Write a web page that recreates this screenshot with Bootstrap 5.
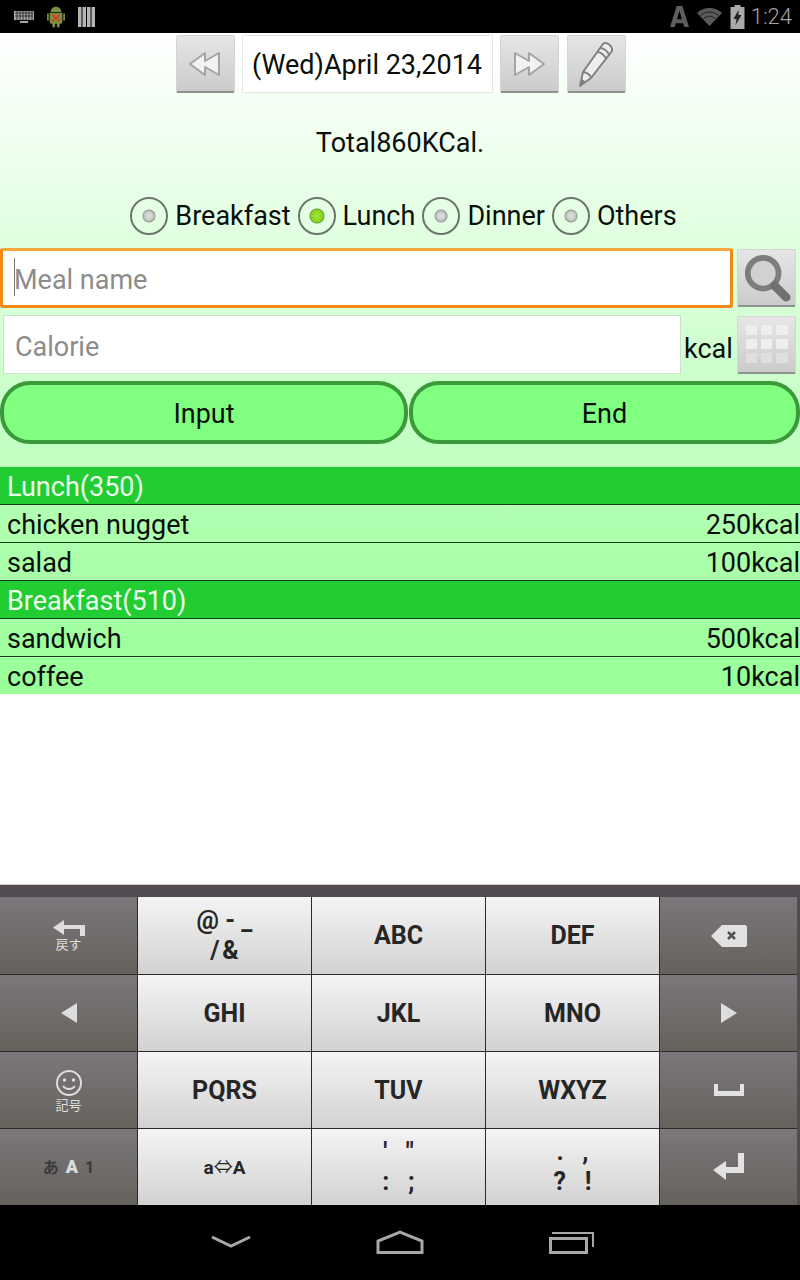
<!DOCTYPE html>
<html lang="en">
<head>
    <meta charset="UTF-8">
    <meta name="viewport" content="width=device-width, initial-scale=1.0">
    <title>Calorie Diary</title>
    <link href="https://cdn.jsdelivr.net/npm/bootstrap@5.3.2/dist/css/bootstrap.min.css" rel="stylesheet">
    <style>
        html, body { height: 1280px; overflow: hidden; }
        body { width: 800px; font-family: Roboto, "Noto Sans CJK JP", sans-serif; font-size: 27px; color: #0a0f0a; background: #fff; }
        .status-bar { height: 33px; background: #000; color: #9a9a9a; padding: 0 8px 0 14px; }
        .status-time { font-size: 22px; font-weight: 300; margin-left: 6px; color: #a5a5a5; }
        .status-left { margin-right: 13px; }
        .status-right { margin-right: 8px; }
        .app-top { height: 434px; background: linear-gradient(#fff 0, #e2ffe2 45%, #bfffbf 100%); }
        .date-row { height: 62px; padding: 2px 0 0 1px; gap: 7px; }
        .gray-btn { width: 59px; height: 58px; padding: 0; border: 1px solid #d4d6d4; border-bottom: 2px solid #8f918f; border-radius: 2px; background: linear-gradient(#e6e6e6, #cbcbcb); display: flex; align-items: center; justify-content: center; flex: none; }
        .pencil-btn { margin-left: 1px; }
        .date-box { width: 251px; height: 58px; background: #fff; border: 1px solid #e3e8e3; text-align: center; line-height: 58px; font-size: 27px; }
        .total-row { height: 95px; padding-top: 2px; }
        .radio-row { height: 52px; padding-left: 7px; }
        .meal-radio { width: 38px; height: 38px; margin: 0 7px 0 0; flex: none; appearance: none; border: 2px solid #6b766b; border-radius: 50%; background: radial-gradient(circle, #dde0dd 0, #ccd0cc 4px, #99a099 6px, transparent 7px); }
        .meal-radio:checked { background: radial-gradient(circle, #a4e432 0, #86d41c 6px, #6d9c3a 7px, transparent 8px); }
        .radio-label { margin-right: 7px; line-height: 38px; }
        .radio-label-end { margin-right: 0; }
        .field-row { padding: 0 4px 0 0; }
        .meal-row { margin-top: 6px; }
        .cal-row { margin-top: 7px; }
        .pill-row { margin-top: 7px; gap: 1px; }
        .meal-input, .cal-input { border-radius: 3px; font-size: 27px; background: #fff; }
        .meal-input { height: 60px; padding: 4px 11px 0; border: 3px solid #f08a14; border-top-color: #f7a53c; }
        .cal-input { height: 59px; width: 678px; margin-left: 3px; padding: 4px 11px 0; flex: none; border: 1px solid #cfe0cf; border-radius: 0; }
        .meal-input::placeholder, .cal-input::placeholder { color: #8c8c8c; font-size: 27px; }
        .meal-input:focus { box-shadow: none; border-color: #f08a14; }
        .text-caret { position: absolute; left: 14px; top: 10px; width: 1px; height: 38px; background: #777; }
        .kcal-label { width: 53px; margin-left: 3px; line-height: 50px; padding-top: 8px; flex: none; }
        .pill-btn { height: 63px; padding: 4px 0 0; border: 4px solid #3a9a3a; border-radius: 30px; background: #80ff80; color: #0a0f0a; font-size: 27px; }
        .pill-left { width: 408px; flex: none; }
        .pill-right { flex: 1 1 0; }
        .meal-list { height: 227px; background: linear-gradient(#b8ffb8, #98ff98); border-radius: 0; }
        .meal-list .list-group-item { height: 38px; padding: 1px 0 0 7px; background: transparent; border: 0; border-bottom: 1px solid #1a3a1a; color: #0a0f0a; font-size: 27px; line-height: 38px; border-radius: 0; margin: 0; }
        .meal-list .list-group-item:last-child { border-bottom: 0; height: 37px; }
        .meal-list .meal-head { background: #22cc33; color: #eaffea; }
        .app-blank { height: 190px; background: #fff; }
        .keyboard { height: 321px; border-top: 1px solid #d0d0d0; background: #524c52; padding-top: 12px; }
        .key-grid { display: grid; grid-template-columns: 137px 173px 173px 173px 137px; grid-template-rows: 77px 76px 76px 76px; gap: 1px; background: #2a2a2a; height: 308px; width: 797px; border-right: 1px solid #2a2a2a; }
        .key { display: flex; flex-direction: column; align-items: center; justify-content: center; padding: 0; border: 0; border-radius: 0; font-family: Roboto, "Noto Sans CJK JP", sans-serif; line-height: 1; }
        .key-light { background: linear-gradient(#f4f4f4, #d2d2d2); color: #262626; font-weight: 700; font-size: 25px; }
        .key-dark { background: linear-gradient(#7b777b, #65625c); color: #dcdcdc; }
        .key-cap { font-size: 13px; margin-top: 2px; color: #dedede; }
        .key-pair { font-size: 25px; line-height: 30px; white-space: pre; }
        .key-mode { font-size: 16px; font-weight: 700; color: #3b3b3b; }
        .key-mode b { color: #ddd; margin: 0 7px; font-size: 18px; }
        .key-swap { font-size: 19px; }
        .swap-arrow { font-weight: 400; }
        .nav-bar { height: 75px; background: #000; padding-bottom: 2px; }
        .nav-back { margin-left: 211px; }
        .nav-other { margin-left: 125px; }
    </style>
</head>
<body>
    <div class="status-bar d-flex align-items-center">
        <svg width="20" height="12" viewBox="0 0 20 12" class="status-left"><path fill="#a8a8a8" d="M0 0h20v9H0z"/><path stroke="#333" d="M1 2h18M1 5h18M3 0v9M6 0v9M9 0v9M12 0v9M15 0v9M18 0v9"/><path fill="#a8a8a8" d="M6 10h8v2H6z"/></svg>
        <svg width="18" height="22" viewBox="0 0 20 26" class="status-left" preserveAspectRatio="none"><path fill="#7a8f40" d="M4 7a6 6 0 0 1 12 0zM3 8h14v11a2 2 0 0 1-2 2h-1v4h-3v-4H9v4H6v-4H5a2 2 0 0 1-2-2zM0 9h2v8H0zM18 9h2v8h-2z"/><path stroke="#c8482a" stroke-width="2.4" d="M6 10l8 8M14 10l-8 8"/></svg>
        <svg width="17" height="20" viewBox="0 0 17 20"><path fill="#b4b4b4" d="M0 0h3.500v20H0zM4.500 0H8v20H4.500zM9 0h3.500v20H9zM13.500 0H17v20h-3.500z"/></svg>
        <div class="ms-auto d-flex align-items-center">
            <svg width="19" height="21" viewBox="0 0 20 22" class="status-right"><path fill="#5e5e5e" d="M7 0h6l7 22h-5l-1.200-4H6.200L5 22H0zM7.400 14h5.200L10 5z"/></svg>
            <svg width="25" height="18" viewBox="0 0 25 18" class="status-right"><path fill="#5a5a5a" d="M0 5a18 18 0 0 1 25 0L12.500 18z"/><path stroke="#222" fill="none" d="M3.500 7.500a13 13 0 0 1 18 0M6.500 10.500a9 9 0 0 1 12 0"/></svg>
            <svg width="15" height="24" viewBox="0 0 14 24"><path fill="#aaa" d="M4 0h6v2h4v22H0V2h4z"/><path fill="#222" d="M8 5L3 14h3l-1 6 6-10H8z"/></svg>
            <span class="status-time">1:24</span>
        </div>
    </div>

    <div class="app-top d-flex flex-column">
        <div class="date-row d-flex justify-content-center">
            <button type="button" class="gray-btn btn">
                <svg width="34" height="26" viewBox="0 0 34 26"><path fill="#f2f2f2" stroke="#a3a5a3" stroke-width="2" stroke-linejoin="round" d="M17 2v8l14-8v22l-14-8v8L2 13z"/></svg>
            </button>
            <div class="date-box">(Wed)April 23,2014</div>
            <button type="button" class="gray-btn btn">
                <svg width="34" height="26" viewBox="0 0 34 26"><path fill="#f2f2f2" stroke="#a3a5a3" stroke-width="2" stroke-linejoin="round" d="M17 2v8L3 2v22l14-8v8l15-11z"/></svg>
            </button>
            <button type="button" class="gray-btn btn pencil-btn">
                <svg width="40" height="48" viewBox="0 0 40 48"><path fill="#eee" stroke="#7f817f" stroke-width="2" stroke-linejoin="round" d="M27 4c3-3 10 2 9 7L15 38 4 46l3-14z"/><path stroke="#7f817f" stroke-width="2" fill="none" d="M24 8c4 0 9 4 9 8M21 12c4 0 9 4 9 8M7 32c3 0 8 3 8 6"/><path fill="#7f817f" d="M4 46l2-7 4 3z"/></svg>
            </button>
        </div>
        <div class="total-row d-flex align-items-center justify-content-center">Total860KCal.</div>
        <div class="radio-row d-flex align-items-center justify-content-center">
            <input class="meal-radio" type="radio" name="meal" id="m1"><label class="radio-label" for="m1">Breakfast</label>
            <input class="meal-radio" type="radio" name="meal" id="m2" checked><label class="radio-label" for="m2">Lunch</label>
            <input class="meal-radio" type="radio" name="meal" id="m3"><label class="radio-label" for="m3">Dinner</label>
            <input class="meal-radio" type="radio" name="meal" id="m4"><label class="radio-label radio-label-end" for="m4">Others</label>
        </div>
        <div class="field-row meal-row d-flex align-items-center gap-1">
            <div class="position-relative flex-grow-1">
                <input class="form-control meal-input" type="text" placeholder="Meal name">
                <span class="text-caret"></span>
            </div>
            <button type="button" class="gray-btn btn">
                <svg width="48" height="50" viewBox="0 0 50 52"><circle cx="21" cy="21" r="16" fill="#d0d2d0" stroke="#7c7e7c" stroke-width="6"/><path stroke="#6f716f" stroke-width="9" stroke-linecap="round" d="M33 34l12 12"/></svg>
            </button>
        </div>
        <div class="field-row cal-row d-flex align-items-center">
            <input class="form-control cal-input" type="text" placeholder="Calorie">
            <span class="kcal-label">kcal</span>
            <button type="button" class="gray-btn btn">
                <svg width="42" height="38" viewBox="0 0 42 38"><g fill="#eeeeee"><rect width="11" height="10"/><rect x="15" width="11" height="10"/><rect x="30" width="12" height="10"/><rect y="14" width="11" height="10"/><rect x="15" y="14" width="11" height="10"/><rect x="30" y="14" width="12" height="10"/></g><g fill="#dfdfdf"><rect y="28" width="11" height="10"/><rect x="15" y="28" width="11" height="10"/><rect x="30" y="28" width="12" height="10"/></g></svg>
            </button>
        </div>
        <div class="pill-row d-flex">
            <button type="button" class="btn pill-btn pill-left">Input</button>
            <button type="button" class="btn pill-btn pill-right">End</button>
        </div>
    </div>

    <ul class="list-group meal-list">
        <li class="list-group-item meal-head">Lunch(350)</li>
        <li class="list-group-item d-flex justify-content-between"><span>chicken nugget</span><span>250kcal</span></li>
        <li class="list-group-item d-flex justify-content-between"><span>salad</span><span>100kcal</span></li>
        <li class="list-group-item meal-head">Breakfast(510)</li>
        <li class="list-group-item d-flex justify-content-between"><span>sandwich</span><span>500kcal</span></li>
        <li class="list-group-item d-flex justify-content-between"><span>coffee</span><span>10kcal</span></li>
    </ul>
    <div class="app-blank"></div>

    <div class="keyboard">
        <div class="key-grid">
            <button type="button" class="btn key key-dark">
                <svg width="32" height="16" viewBox="0 0 32 16"><path fill="#ddd" d="M11 0v5h21v11h-5V9H11v6L0 7.500z"/></svg>
                <span class="key-cap">戻す</span>
            </button>
            <button type="button" class="btn key key-light key-pair">@ - _
/&#8202;&amp;</button>
            <button type="button" class="btn key key-light">ABC</button>
            <button type="button" class="btn key key-light">DEF</button>
            <button type="button" class="btn key key-dark">
                <svg width="36" height="22" viewBox="0 0 36 22"><path fill="#e2e2e2" d="M11 0h23a2 2 0 0 1 2 2v18a2 2 0 0 1-2 2H11L0 11z"/><path stroke="#55524f" stroke-width="2.500" d="M17 7l7 7M24 7l-7 7"/></svg>
            </button>

            <button type="button" class="btn key key-dark">
                <svg width="16" height="20" viewBox="0 0 16 20"><path fill="#ddd" d="M16 0v20L0 10z"/></svg>
            </button>
            <button type="button" class="btn key key-light">GHI</button>
            <button type="button" class="btn key key-light">JKL</button>
            <button type="button" class="btn key key-light">MNO</button>
            <button type="button" class="btn key key-dark">
                <svg width="16" height="20" viewBox="0 0 16 20"><path fill="#ddd" d="M0 0v20l16-10z"/></svg>
            </button>

            <button type="button" class="btn key key-dark">
                <svg width="28" height="28" viewBox="0 0 28 28"><circle cx="14" cy="14" r="12" fill="none" stroke="#ddd" stroke-width="2"/><circle cx="9.500" cy="11" r="1.700" fill="#ddd"/><circle cx="18.500" cy="11" r="1.700" fill="#ddd"/><path d="M8 17c3 4 9 4 12 0" fill="none" stroke="#ddd" stroke-width="2"/></svg>
                <span class="key-cap">記号</span>
            </button>
            <button type="button" class="btn key key-light">PQRS</button>
            <button type="button" class="btn key key-light">TUV</button>
            <button type="button" class="btn key key-light">WXYZ</button>
            <button type="button" class="btn key key-dark">
                <svg width="30" height="12" viewBox="0 0 30 12"><path fill="#e2e2e2" d="M0 0h4v7h22V0h4v12H0z"/></svg>
            </button>

            <button type="button" class="btn key key-dark key-mode d-block"><span>あ<b>A</b>1</span></button>
            <button type="button" class="btn key key-light key-swap"><span>a<span class="swap-arrow">⇔</span>A</span></button>
            <button type="button" class="btn key key-light key-pair">′   ″
:   ;</button>
            <button type="button" class="btn key key-light key-pair">.   ,
?   !</button>
            <button type="button" class="btn key key-dark">
                <svg width="32" height="28" viewBox="0 0 32 28"><path fill="#e2e2e2" d="M25 0h6v20H13v7L0 17 13 8v6h12z"/></svg>
            </button>
        </div>
    </div>

    <div class="nav-bar d-flex align-items-center">
        <svg width="40" height="14" viewBox="0 0 40 14" class="nav-back"><path fill="none" stroke="#a8a8a8" stroke-width="3" d="M1 2l19 9 19-9"/></svg>
        <svg width="48" height="24" viewBox="0 0 48 24" class="nav-other"><path fill="none" stroke="#a8a8a8" stroke-width="3" d="M2 22.500V11L24 2l22 9v11.500z"/></svg>
        <svg width="46" height="24" viewBox="0 0 46 24" class="nav-other"><path fill="none" stroke="#a8a8a8" stroke-width="3" d="M1.500 8.500h36v14h-36z"/><path fill="none" stroke="#a8a8a8" stroke-width="2" d="M3 3h41v14"/></svg>
    </div>
    <script src="https://cdn.jsdelivr.net/npm/bootstrap@5.3.2/dist/js/bootstrap.bundle.min.js"></script>
</body>
</html>
